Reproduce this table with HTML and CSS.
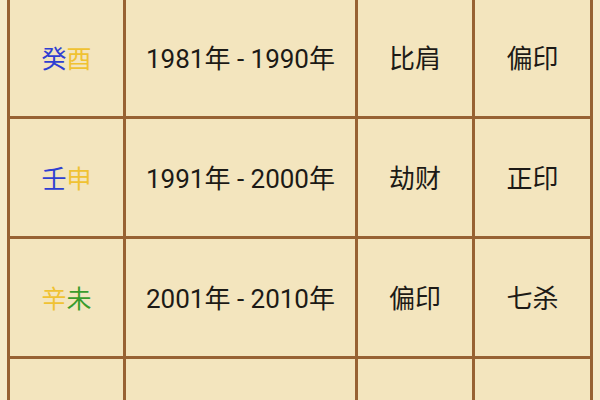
FILE: index.html
```html
<!DOCTYPE html>
<html lang="zh">
<head>
<meta charset="utf-8">
<title>大运</title>
<link rel="stylesheet" href="styles.css">
</head>
<body>
<div class="grid">
  <div class="cell gz"><span class="water">癸</span><span class="earth">酉</span></div>
  <div class="cell">1981年 - 1990年</div>
  <div class="cell">比肩</div>
  <div class="cell">偏印</div>

  <div class="cell gz"><span class="water">壬</span><span class="earth">申</span></div>
  <div class="cell">1991年 - 2000年</div>
  <div class="cell">劫财</div>
  <div class="cell">正印</div>

  <div class="cell gz"><span class="earth">辛</span><span class="wood">未</span></div>
  <div class="cell">2001年 - 2010年</div>
  <div class="cell">偏印</div>
  <div class="cell">七杀</div>

  <div class="cell gz"></div>
  <div class="cell"></div>
  <div class="cell"></div>
  <div class="cell"></div>
</div>
</body>
</html>
```

FILE: styles.css
```css
html, body {
  margin: 0;
  padding: 0;
  background: #f6ebca;
  overflow: hidden;
}

.grid {
  display: grid;
  grid-template-columns: 116px 232px 117px 118px;
  grid-auto-rows: 120px;
  margin: -4px 0 0 7px;
  width: max-content;
  border-left: 3px solid #976233;
  border-top: 3px solid #976233;
  background: #f3e5be;
}

.cell {
  box-sizing: border-box;
  border-right: 3px solid #976233;
  border-bottom: 3px solid #976233;
  display: flex;
  align-items: center;
  justify-content: center;
  font-family: "Roboto", "Noto Sans CJK SC", sans-serif;
  font-size: 26px;
  color: #1c1a16;
  padding-bottom: 2px;
}

.gz {
  font-family: "Noto Sans CJK SC", sans-serif;
  font-size: 25px;
}

.water { color: #2f3fd2; }
.earth { color: #f0c232; }
.wood  { color: #3a9c2c; }
```
